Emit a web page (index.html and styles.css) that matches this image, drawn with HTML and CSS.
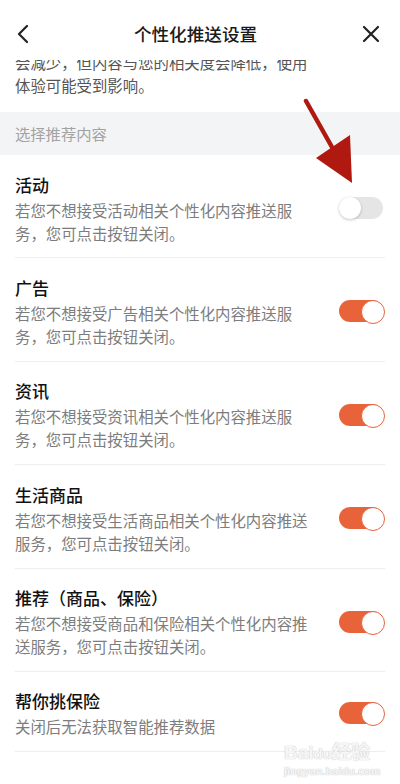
FILE: index.html
```html
<!DOCTYPE html>
<html>
<head>
  <meta charset="UTF-8">
  <meta name="viewport" content="width=device-width, initial-scale=1">
  <link rel="stylesheet" href="styles.css">
</head>
<body>
  <div class="screen">
    <header class="topbar">
      <svg class="icon back" viewBox="0 0 12 20" width="12" height="20">
        <path d="M10 2 L2 10 L10 18" fill="none" stroke="#222" stroke-width="2.2" stroke-linecap="round" stroke-linejoin="round"/>
      </svg>
      <h1>个性化推送设置</h1>
      <svg class="icon close" viewBox="0 0 18 18" width="18" height="18">
        <path d="M2 2 L16 16 M16 2 L2 16" fill="none" stroke="#222" stroke-width="2.2" stroke-linecap="round"/>
      </svg>
    </header>

    <div class="scroller">
      <p class="intro">会减少，但内容与您的相关度会降低，使用<br>体验可能受到影响。</p>

      <div class="section">选择推荐内容</div>

      <ul class="list">
        <li class="item">
          <div class="text">
            <div class="title">活动</div>
            <div class="desc">若您不想接受活动相关个性化内容推送服务，您可点击按钮关闭。</div>
          </div>
          <span class="switch"></span>
        </li>
        <li class="item">
          <div class="text">
            <div class="title">广告</div>
            <div class="desc">若您不想接受广告相关个性化内容推送服务，您可点击按钮关闭。</div>
          </div>
          <span class="switch on"></span>
        </li>
        <li class="item">
          <div class="text">
            <div class="title">资讯</div>
            <div class="desc">若您不想接受资讯相关个性化内容推送服务，您可点击按钮关闭。</div>
          </div>
          <span class="switch on"></span>
        </li>
        <li class="item">
          <div class="text">
            <div class="title">生活商品</div>
            <div class="desc">若您不想接受生活商品相关个性化内容推送服务，您可点击按钮关闭。</div>
          </div>
          <span class="switch on"></span>
        </li>
        <li class="item">
          <div class="text">
            <div class="title">推荐（商品、保险）</div>
            <div class="desc">若您不想接受商品和保险相关个性化内容推送服务，您可点击按钮关闭。</div>
          </div>
          <span class="switch on"></span>
        </li>
        <li class="item">
          <div class="text">
            <div class="title">帮你挑保险</div>
            <div class="desc">关闭后无法获取智能推荐数据</div>
          </div>
          <span class="switch on"></span>
        </li>
      </ul>
    </div>

    <!-- annotation arrow drawn over the screenshot -->
    <svg class="arrow" viewBox="0 0 60 95" width="60" height="95">
      <path d="M4 3 L35 58" stroke="#b0190f" stroke-width="4.5" stroke-linecap="round"/>
      <path d="M14 60 L48 37 L50 85 Z" fill="#b0190f"/>
    </svg>

    <div class="watermark">
      <span class="wm-logo">Bai<b>du</b>经验</span>
      <span class="wm-url">jingyan.baidu.com</span>
    </div>
  </div>
</body>
</html>
```

FILE: styles.css
```css
* {
  box-sizing: border-box;
}

body {
  margin: 0;
  background: #fff;
  font-family: "Noto Sans CJK SC", "Noto Sans", sans-serif;
  color: #111;
}

.screen {
  position: relative;
  width: 400px;
  height: 784px;
  overflow: hidden;
}

.topbar {
  position: relative;
  z-index: 2;
  display: flex;
  align-items: center;
  justify-content: space-between;
  height: 60px;
  padding: 8px 20px 0 17px;
  background: #fff;
}

.topbar h1 {
  margin: 0;
  font-size: 17.6px;
  font-weight: 500;
  color: #1a1a1a;
  line-height: 24px;
}

.icon.back {
  width: 12px;
  height: 20px;
}

.scroller {
  overflow: hidden;
}

.intro {
  margin: -9px 0 0;
  padding: 0 15px 15px;
  font-size: 15.4px;
  line-height: 23px;
  color: #555;
}

.section {
  height: 43px;
  padding-left: 15px;
  line-height: 43px;
  font-size: 15.3px;
  color: #a2a2a2;
  background: #f3f4f6;
}

.list {
  list-style: none;
  margin: 0;
  padding: 0 15px;
}

.item {
  display: flex;
  align-items: center;
  justify-content: space-between;
  padding: 16.5px 0 12.9px;
  border-bottom: 1px solid #eeeeee;
}

.text {
  width: 300px;
}

.title {
  font-size: 17px;
  font-weight: 500;
  line-height: 25px;
  color: #111;
}

.desc {
  margin-top: 2px;
  font-size: 15.4px;
  line-height: 23px;
  color: #7d7d7d;
}

.switch {
  position: relative;
  flex: none;
  width: 44px;
  height: 22px;
  margin-right: 2px;
  border-radius: 11px;
  background: #e5e5e5;
}

.switch::after {
  content: "";
  position: absolute;
  top: 0;
  left: 0;
  width: 22px;
  height: 22px;
  border-radius: 50%;
  background: #fff;
  box-shadow: 0 1px 3px rgba(0, 0, 0, 0.22);
}

.switch.on {
  background: #e9633a;
}

.switch.on::after {
  left: 22px;
  box-shadow: none;
  border: 1.5px solid #e9633a;
}

.arrow {
  position: absolute;
  left: 302px;
  top: 98px;
  z-index: 3;
}

.watermark {
  position: absolute;
  left: 284px;
  top: 742px;
  z-index: 3;
  display: flex;
  flex-direction: column;
  font-family: "Liberation Sans", "Noto Sans CJK SC", sans-serif;
  color: rgba(255, 255, 255, 0.85);
  text-shadow: 0 0 1px #c8c8c8, 0 0 1px #c8c8c8;
}

.wm-logo {
  font-size: 19px;
  font-weight: bold;
  line-height: 22px;
}

.wm-logo b {
  font-size: 15px;
}

.wm-url {
  font-size: 11px;
  font-weight: bold;
  line-height: 13px;
}
```
